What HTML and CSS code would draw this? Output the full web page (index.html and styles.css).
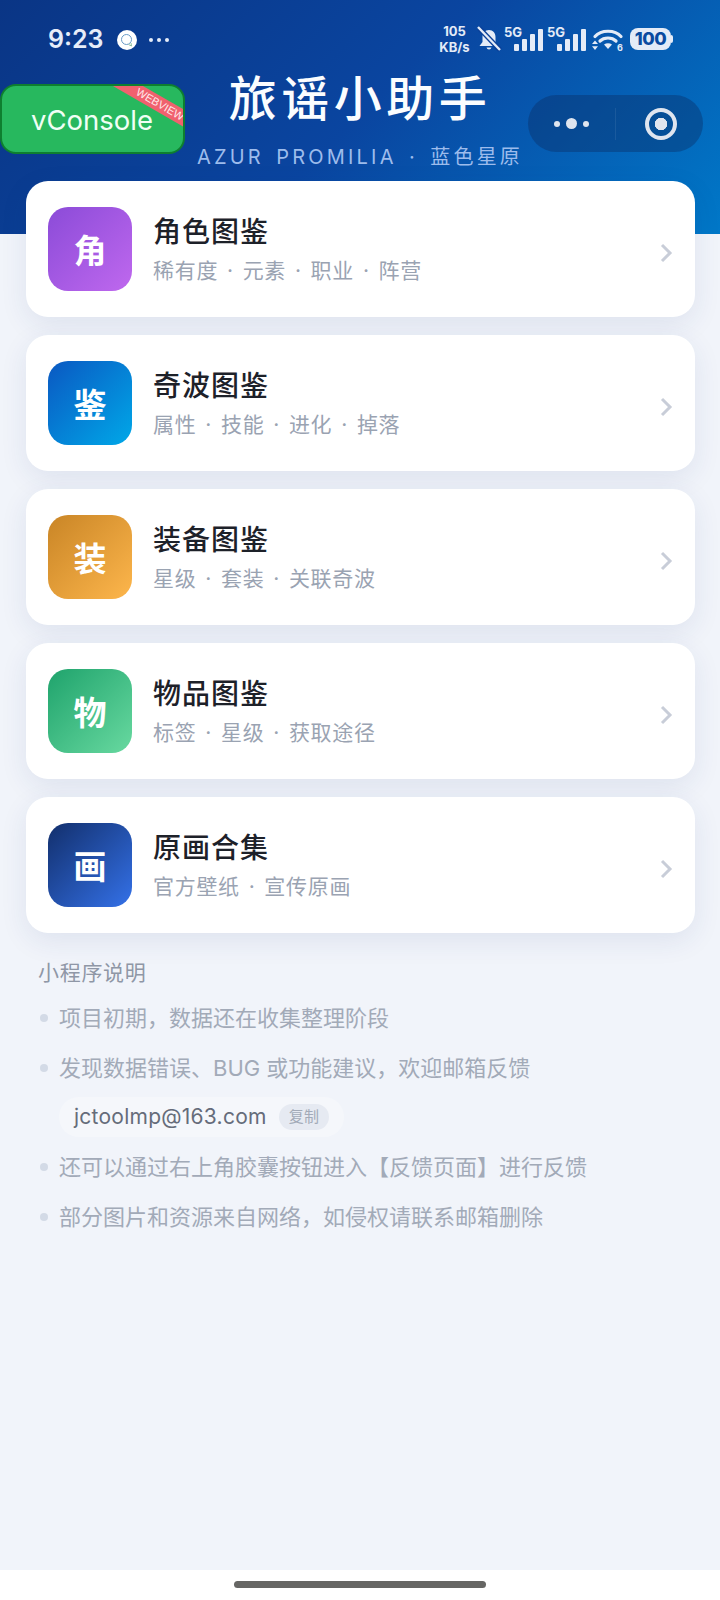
FILE: index.html
```html
<!DOCTYPE html>
<html lang="zh">
<head>
  <meta charset="UTF-8" />
  <meta name="viewport" content="width=device-width, initial-scale=1.0"/>
  <title>旅谣小助手</title>
  <link rel="stylesheet" href="styles.css">
</head>
<body>
  <div class="screen">
    <header class="hero">
      <div class="status-bar">
        <div class="status-left">
          <span class="clock">9:23</span>
          <span class="app-badge">
            <svg width="20" height="20" viewBox="0 0 20 20"><circle cx="9.500" cy="9.500" r="5" fill="none" stroke="#6a9cc8" stroke-width="1"/><path d="M11.500 14.500l3 1.500-.5-3" fill="#fff" stroke="#8fc09c" stroke-width="1"/></svg>
          </span>
          <span class="more-dots"><i></i><i></i><i></i></span>
        </div>
        <div class="status-right">
          <span class="net-speed"><b>105</b><b>KB/s</b></span>
          <svg class="bell" width="26" height="26" viewBox="0 0 26 26"><path d="M13 4c-4 0-6.500 3-6.500 7v5L3.500 20h19l-3-4v-5c0-4-2.500-7-6.500-7z" fill="#e4ebf7"/><path d="M10.500 21.500a2.600 2.600 0 0 0 5 0z" fill="#e4ebf7"/><path d="M3 2l21 22" stroke="#0a3f98" stroke-width="5"/><path d="M2 1l22 23" stroke="#e4ebf7" stroke-width="2.400"/></svg>
          <span class="signal"><em>5G</em><svg width="30" height="24" viewBox="0 0 30 24"><rect x="1" y="16" width="5" height="7" rx="1"/><rect x="9" y="11" width="5" height="12" rx="1"/><rect x="17" y="6" width="5" height="17" rx="1"/><rect x="25" y="1" width="5" height="22" rx="1"/></svg></span>
          <span class="signal"><em>5G</em><svg width="30" height="24" viewBox="0 0 30 24"><rect x="1" y="16" width="5" height="7" rx="1"/><rect x="9" y="11" width="5" height="12" rx="1"/><rect x="17" y="6" width="5" height="17" rx="1"/><rect x="25" y="1" width="5" height="22" rx="1"/></svg></span>
          <svg class="wifi" width="32" height="26" viewBox="0 0 32 26"><path d="M3 10.500C9 3.500 23 3.500 29 10.500M8 15c4-4 12-4 16 0" fill="none" stroke="#e4ebf7" stroke-width="3.200" stroke-linecap="round"/><path d="M12 18.500c2.500-1.800 5.500-1.800 8 0L16 23z" fill="#e4ebf7"/><path d="M3 14.500l3 3.500H0zM3 24l3-3.800H0z" fill="#e4ebf7"/><text x="25" y="24.500" class="wifi-num">6</text></svg>
          <span class="battery">100</span>
        </div>
      </div>
      <h1 class="hero-title">旅谣小助手</h1>
      <p class="hero-sub">AZUR PROMILIA · 蓝色星原</p>

      <div class="capsule">
        <span class="capsule-more"><i></i><i class="big"></i><i></i></span>
        <span class="capsule-line"></span>
        <span class="capsule-close"></span>
      </div>
      <div class="vconsole">vConsole<span class="vc-ribbon">WEBVIEW</span></div>
    </header>

    <main class="menu">
      <a class="card">
        <span class="card-icon purple">角</span>
        <span class="card-text"><strong>角色图鉴</strong><small>稀有度 · 元素 · 职业 · 阵营</small></span>
        <svg class="chevron" width="14" height="22" viewBox="0 0 14 22"><path d="M3 3l8 8-8 8" fill="none" stroke="#c8cdd8" stroke-width="3"/></svg>
      </a>
      <a class="card">
        <span class="card-icon blue">鉴</span>
        <span class="card-text"><strong>奇波图鉴</strong><small>属性 · 技能 · 进化 · 掉落</small></span>
        <svg class="chevron" width="14" height="22" viewBox="0 0 14 22"><path d="M3 3l8 8-8 8" fill="none" stroke="#c8cdd8" stroke-width="3"/></svg>
      </a>
      <a class="card">
        <span class="card-icon orange">装</span>
        <span class="card-text"><strong>装备图鉴</strong><small>星级 · 套装 · 关联奇波</small></span>
        <svg class="chevron" width="14" height="22" viewBox="0 0 14 22"><path d="M3 3l8 8-8 8" fill="none" stroke="#c8cdd8" stroke-width="3"/></svg>
      </a>
      <a class="card">
        <span class="card-icon green">物</span>
        <span class="card-text"><strong>物品图鉴</strong><small>标签 · 星级 · 获取途径</small></span>
        <svg class="chevron" width="14" height="22" viewBox="0 0 14 22"><path d="M3 3l8 8-8 8" fill="none" stroke="#c8cdd8" stroke-width="3"/></svg>
      </a>
      <a class="card">
        <span class="card-icon navy">画</span>
        <span class="card-text"><strong>原画合集</strong><small>官方壁纸 · 宣传原画</small></span>
        <svg class="chevron" width="14" height="22" viewBox="0 0 14 22"><path d="M3 3l8 8-8 8" fill="none" stroke="#c8cdd8" stroke-width="3"/></svg>
      </a>
    </main>

    <section class="notes">
      <h2 class="notes-title">小程序说明</h2>
      <ul class="notes-list">
        <li class="note">项目初期，数据还在收集整理阶段</li>
        <li class="note">发现数据错误、BUG 或功能建议，欢迎邮箱反馈</li>
        <li class="mail-row">
          <span class="mail-pill">jctoolmp@163.com<span class="copy-btn">复制</span></span>
        </li>
        <li class="note">还可以通过右上角胶囊按钮进入【反馈页面】进行反馈</li>
        <li class="note">部分图片和资源来自网络，如侵权请联系邮箱删除</li>
      </ul>
    </section>

    <footer class="nav-bar"><span class="home-bar"></span></footer>
  </div>
</body>
</html>
```

FILE: styles.css
```css
* {
  box-sizing: border-box;
}
body {
  margin: 0;
  background: #f1f4fa;
  font-family: Inter, "Noto Sans CJK SC", sans-serif;
}
.screen {
  width: 720px;
  height: 1600px;
  display: flex;
  flex-direction: column;
  background: #f1f4fa;
  overflow: hidden;
}

/* top header */
.hero {
  position: relative;
  height: 234px;
  flex: none;
  background: linear-gradient(135deg, #0a3585 0%, #0a45a0 50%, #0078c8 100%);
  color: #fff;
}
.status-bar {
  height: 78px;
  padding: 0 49px 0 48px;
  display: flex;
  justify-content: space-between;
  align-items: center;
}
.status-left {
  display: flex;
  align-items: center;
}
.clock {
  font-size: 25px;
  font-weight: 600;
  color: #e6edf9;
}
.app-badge {
  width: 20px;
  height: 20px;
  margin: 2px 0 0 14px;
  border-radius: 50%;
  background: #fff;
  display: flex;
}
.more-dots {
  display: flex;
  gap: 4px;
  margin: 2px 0 0 12px;
}
.more-dots i {
  width: 4px;
  height: 4px;
  border-radius: 50%;
  background: #e6edf9;
}
.status-right {
  display: flex;
  align-items: center;
  color: #e4ebf7;
}
.net-speed {
  width: 31px;
  display: flex;
  flex-direction: column;
  align-items: center;
  font-size: 13px;
  line-height: 16px;
  white-space: nowrap;
}
.net-speed b {
  font-weight: 700;
}
.bell {
  margin-left: 6px;
}
.signal {
  position: relative;
  display: flex;
  padding-top: 2px;
  margin-left: 11px;
}
.signal svg {
  fill: #e4ebf7;
}
.signal em {
  position: absolute;
  left: -9px;
  top: -2px;
  font-style: normal;
  font-weight: 700;
  font-size: 13px;
}
.signal + .signal {
  margin-left: 13px;
}
.wifi {
  margin-left: 6px;
}
.wifi-num {
  font: 700 9px Inter, sans-serif;
  fill: #e4ebf7;
}
.battery {
  position: relative;
  margin-left: 6px;
  width: 41px;
  height: 22px;
  border-radius: 8px;
  background: #e4ebf7;
  color: #0a4aa0;
  font-size: 18px;
  font-weight: 800;
  line-height: 22px;
  letter-spacing: -0.500px;
  text-align: center;
}
.battery::after {
  content: "";
  position: absolute;
  right: -2px;
  top: 7px;
  width: 2px;
  height: 8px;
  border-radius: 0 2px 2px 0;
  background: #e4ebf7;
}
.hero-title {
  margin: -8px 0 0;
  font-size: 48px;
  line-height: 58px;
  font-weight: 500;
  letter-spacing: 4.500px;
  text-align: center;
  color: #fbfdff;
}
.hero-sub {
  margin: 14px 0 0;
  font-size: 20px;
  line-height: 30px;
  letter-spacing: 3.200px;
  word-spacing: 3.500px;
  text-align: center;
  color: #9dbcec;
}
.capsule {
  position: absolute;
  left: 528px;
  top: 95px;
  width: 175px;
  height: 57px;
  border-radius: 29px;
  background: rgba(10, 45, 100, 0.4);
  display: flex;
  align-items: center;
}
.capsule-more {
  width: 87px;
  display: flex;
  justify-content: center;
  align-items: center;
  gap: 6px;
}
.capsule-more i {
  width: 6px;
  height: 6px;
  border-radius: 50%;
  background: #dfe5ef;
}
.capsule-more .big {
  width: 11px;
  height: 11px;
}
.capsule-line {
  width: 1px;
  height: 32px;
  background: rgba(255, 255, 255, 0.08);
}
.capsule-close {
  width: 32px;
  height: 32px;
  margin-left: 29px;
  border: 4px solid #dfe5ef;
  border-radius: 50%;
  background: radial-gradient(circle, #dfe5ef 0 6px, transparent 6.500px);
}
.vconsole {
  position: absolute;
  left: 0;
  top: 84px;
  width: 185px;
  height: 70px;
  border: 2px solid #0e7f2f;
  border-radius: 16px;
  background: #27b85e;
  color: #f0fff5;
  font-size: 27.500px;
  line-height: 68px;
  padding-left: 29px;
  overflow: hidden;
}
.vc-ribbon {
  position: absolute;
  right: -37px;
  top: 11px;
  width: 120px;
  height: 15px;
  background: #f0616e;
  color: #ffe9ec;
  font-family: "Liberation Sans", sans-serif;
  font-size: 11px;
  line-height: 15px;
  text-align: center;
  transform: rotate(30deg);
}

/* cards */
.menu {
  margin-top: -53px;
  padding: 0 25px 0 26px;
  display: flex;
  flex-direction: column;
  gap: 18px;
  position: relative;
}
.card {
  height: 136px;
  padding: 0 22px 0 22px;
  display: flex;
  align-items: center;
  border-radius: 22px;
  background: #fff;
  box-shadow: 0 8px 28px rgba(30, 60, 120, 0.09);
}
.card-icon {
  width: 84px;
  height: 84px;
  flex: none;
  border-radius: 20px;
  color: #fff;
  font-size: 33px;
  font-weight: 700;
  display: flex;
  align-items: center;
  justify-content: center;
}
.purple {
  background: linear-gradient(135deg, #8b4bd8, #bf68ee);
}
.blue {
  background: linear-gradient(135deg, #0a58c2, #00a8e8);
}
.orange {
  background: linear-gradient(135deg, #c98526, #fdb64c);
}
.green {
  background: linear-gradient(135deg, #1fa36c, #68d9a0);
}
.navy {
  background: linear-gradient(135deg, #122f6c, #3471e8);
}
.card-text {
  flex: 1;
  margin-left: 21px;
  display: flex;
  flex-direction: column;
}
.card-text strong {
  font-size: 28px;
  line-height: 40px;
  font-weight: 500;
  letter-spacing: 1px;
  color: #1d2129;
}
.card-text small {
  margin-top: 4px;
  font-size: 21px;
  line-height: 30px;
  letter-spacing: 0.700px;
  word-spacing: 2.300px;
  color: #9aa3b2;
}
.chevron {
  margin-top: 8px;
}

/* notes */
.notes {
  padding: 25px 30px 0 38px;
}
.notes-title {
  margin: 0;
  font-size: 21px;
  line-height: 30px;
  font-weight: 400;
  letter-spacing: 0.700px;
  color: #8f97a6;
}
.notes-list {
  list-style: none;
  margin: 5px 0 0;
  padding: 0;
}
.note {
  position: relative;
  height: 49.500px;
  padding-left: 21px;
  font-size: 22px;
  line-height: 50px;
  color: #a2aab8;
}
.note::before {
  content: "";
  position: absolute;
  left: 2px;
  top: 21px;
  width: 8px;
  height: 8px;
  border-radius: 50%;
  background: #d3dae6;
}
.mail-row {
  height: 50px;
  padding-left: 21px;
  display: flex;
  align-items: center;
}
.mail-pill {
  height: 40px;
  margin-top: -1px;
  padding: 0 15px;
  display: flex;
  align-items: center;
  border-radius: 20px;
  background: #f5f7fb;
  font-size: 21px;
  letter-spacing: 0.250px;
  color: #656c7a;
}
.copy-btn {
  margin-left: 12px;
  height: 26px;
  padding: 0 10px;
  border-radius: 13px;
  background: #e6eaf2;
  color: #a2aab8;
  font-size: 15px;
  line-height: 26px;
}

/* bottom */
.nav-bar {
  margin-top: auto;
  height: 30px;
  flex: none;
  background: #fff;
  display: flex;
  justify-content: center;
  padding-top: 11px;
}
.home-bar {
  width: 252px;
  height: 7px;
  border-radius: 4px;
  background: #666664;
}
```
